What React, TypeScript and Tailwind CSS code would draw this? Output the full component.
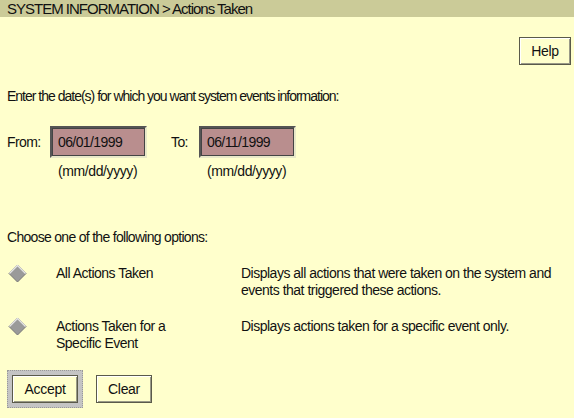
import React from "react";

const font = { fontFamily: '"Liberation Sans", Arial, sans-serif' };

const DateField = ({ label, labelW, value }: { label: string; labelW: string; value: string }) => (
  <div className="flex flex-col">
    <div className="flex items-center">
      <span className={`${labelW} tracking-[-0.6px]`}>{label}</span>
      <div className="w-[97px] h-[32px] border-2 border-t-[#555] border-l-[#555] border-b-[#e8e8c8] border-r-[#e8e8c8]">
        <div className="h-full border border-[#444] bg-[#b98e8e] pl-[5px] flex items-center tracking-[-0.6px]">
          {value}
        </div>
      </div>
    </div>
    <span className={`${labelW === "w-[43px]" ? "ml-[51px]" : "ml-[36px]"} mt-[3px] tracking-[-0.4px]`}>(mm/dd/yyyy)</span>
  </div>
);

const Diamond = () => (
  <svg width="19" height="19" viewBox="0 0 19 19" className="mt-[-1px]">
    <polygon points="9.5,1 18,9.5 9.5,18 1,9.5" fill="#9a9a9a" stroke="#777" strokeWidth="1" />
    <polyline points="1.5,9.5 9.5,1.5 17.5,9.5" fill="none" stroke="#e4e4e4" strokeWidth="1.3" />
  </svg>
);

const Option = ({ label, desc }: { label: React.ReactNode; desc: React.ReactNode }) => (
  <div className="flex items-start leading-[17px]">
    <div className="w-[49px] pl-[1px]">
      <Diamond />
    </div>
    <div className="w-[185px] tracking-[-0.5px]">{label}</div>
    <div className="flex-1 tracking-[-0.5px]">{desc}</div>
  </div>
);

const Btn = ({ children, w }: { children: React.ReactNode; w: string }) => (
  <div
    className={`${w} h-[28px] flex items-center justify-center bg-[#ffffcc] border border-[#5a5a4a] shadow-[inset_1px_1px_0_#ffffff,inset_-1px_-1px_0_#9a9a88] tracking-[-0.3px]`}
  >
    {children}
  </div>
);

export default function App() {
  return (
    <div className="w-[574px] h-[418px] bg-[#ffffcc] text-[#111] text-[14px] overflow-hidden" style={font}>
      <div className="h-[17px] bg-[#cbcb98] pl-[7px] leading-[17px] text-[15px] tracking-[-1px]">
        SYSTEM INFORMATION &gt; Actions Taken
      </div>
      <div className="flex justify-end pr-[3px] pt-[20px]">
        <Btn w="w-[52px]">Help</Btn>
      </div>
      <div className="px-[7px]">
        <p className="mt-[21px] tracking-[-1px]">Enter the date(s) for which you want system events information:</p>
        <div className="flex gap-[24px] mt-[19px]">
          <DateField label="From:" labelW="w-[43px]" value="06/01/1999" />
          <DateField label="To:" labelW="w-[28px]" value="06/11/1999" />
        </div>
        <p className="mt-[45px] tracking-[-0.7px]">Choose one of the following options:</p>
        <div className="flex flex-col gap-[19px] mt-[17px]">
          <Option
            label="All Actions Taken"
            desc={
              <>
                Displays all actions that were taken on the system and
                <br />
                events that triggered these actions.
              </>
            }
          />
          <Option
            label={
              <>
                Actions Taken for a
                <br />
                Specific Event
              </>
            }
            desc="Displays actions taken for a specific event only."
          />
        </div>
        <div className="flex items-center gap-[13px] mt-[18px]">
          <div className="p-[4px] bg-[#c4c4c4] border border-dotted border-[#999]">
            <Btn w="w-[66px]">Accept</Btn>
          </div>
          <Btn w="w-[56px]">Clear</Btn>
        </div>
      </div>
    </div>
  );
}
